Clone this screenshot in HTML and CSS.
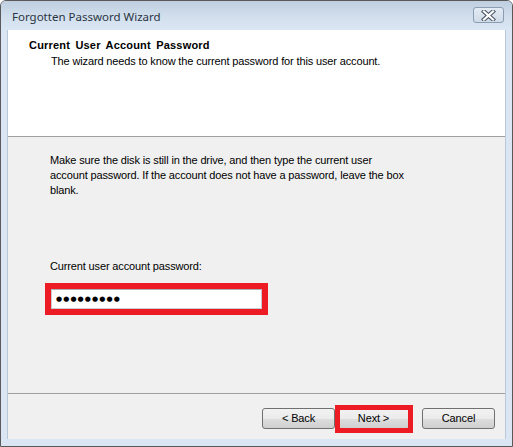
FILE: index.html
```html
<!DOCTYPE html>
<html>
<head>
<meta charset="utf-8">
<link rel="stylesheet" href="styles.css">
</head>
<body>
<div class="window">
  <div class="titlebar">
    <span class="title">Forgotten Password Wizard</span>
    <span class="close">
      <svg width="15" height="11" viewBox="0 0 15 11">
        <path d="M3 1.5 L12 9.5 M12 1.5 L3 9.5" stroke="#4b5563" stroke-width="4.2" stroke-linecap="square" fill="none"/>
        <path d="M3 1.5 L12 9.5 M12 1.5 L3 9.5" stroke="#ffffff" stroke-width="2.2" stroke-linecap="square" fill="none"/>
      </svg>
    </span>
  </div>
  <div class="client">
    <div class="header">
      <div class="h-title">Current User Account Password</div>
      <div class="h-sub">The wizard needs to know the current password for this user account.</div>
    </div>
    <div class="content">
      <p class="intro">Make sure the disk is still in the drive, and then type the current user<br>account password. If the account does not have a password, leave the box<br>blank.</p>
      <div class="field-label">Current user account password:</div>
      <div class="input"><span class="dots">●●●●●●●●●</span></div>
    </div>
    <div class="footer">
      <span class="btn">&lt; Back</span>
      <span class="btn next">Next &gt;</span>
      <span class="btn cancel">Cancel</span>
    </div>
  </div>
</div>
</body>
</html>
```
FILE: styles.css
```css
html, body {
  margin: 0;
  padding: 0;
  background: #ffffff;
}
body {
  font-family: "Liberation Sans", Arial, sans-serif;
  font-size: 11px;
  letter-spacing: -0.14px;
  color: #000;
}
.window {
  width: 513px;
  height: 447px;
  box-sizing: border-box;
  border: 1px solid #595959;
  border-radius: 6px 6px 0 0;
  background: #dae6f3;
  display: flex;
  flex-direction: column;
  padding: 0 6px 7px 6px;
  overflow: hidden;
}
.titlebar {
  height: 29px;
  margin: 0 -6px;
  padding: 0 8px 0 11px;
  display: flex;
  align-items: center;
  justify-content: space-between;
  background: linear-gradient(#bfcfe0, #d3e0ee 60%, #dae6f3);
}
.title {
  font-family: "Noto Sans", sans-serif;
  font-size: 11.5px;
  letter-spacing: 0;
  color: #2a3442;
  margin-top: 1px;
}
.close {
  width: 29px;
  height: 14px;
  border: 1px solid #8c9db2;
  border-radius: 3px;
  background: linear-gradient(#e3ebf4, #cfdbe8);
  display: flex;
  align-items: center;
  justify-content: center;
  margin-top: -1px;
}
.close svg { display: block; }
.client {
  flex: 1;
  display: flex;
  flex-direction: column;
  background: #f0f0f0;
  border-left: 1px solid #b9c7d6;
  border-right: 1px solid #b9c7d6;
}
.header {
  height: 107px;
  box-sizing: border-box;
  background: #ffffff;
  border-bottom: 1px solid #a0a0a0;
  padding: 8px 0 0 21px;
}
.h-title {
  font-weight: bold;
  line-height: 15px;
  letter-spacing: 0.2px;
  word-spacing: 2px;
}
.h-sub {
  line-height: 15px;
  margin-top: 1px;
  padding-left: 22px;
}
.content {
  flex: 1;
  padding: 16px 0 0 42px;
}
.intro {
  margin: 0;
  line-height: 15px;
}
.field-label {
  margin-top: 61px;
  line-height: 15px;
}
.input {
  margin-top: 15px;
  margin-left: 1px;
  width: 211px;
  height: 20px;
  box-sizing: border-box;
  background: #ffffff;
  border: 1px solid #c9ccd2;
  border-top-color: #abadb3;
  outline: 6px solid #ed1c24;
  display: flex;
  align-items: center;
  padding-left: 4px;
}
.dots {
  font-family: "DejaVu Sans", sans-serif;
  font-size: 7px;
  letter-spacing: 1.1px;
  color: #000;
  line-height: 1;
}
.footer {
  height: 46px;
  box-sizing: border-box;
  border-top: 1px solid #a0a0a0;
  display: flex;
  justify-content: flex-end;
  align-items: flex-start;
  padding: 14px 10px 0 0;
}
.btn {
  position: relative;
  width: 73px;
  height: 21px;
  box-sizing: border-box;
  border: 1px solid #707070;
  border-radius: 3px;
  background: linear-gradient(#f2f2f2 0%, #ebebeb 50%, #dddddd 51%, #cfcfcf 100%);
  display: flex;
  align-items: center;
  justify-content: center;
  line-height: 1;
  color: #000;
}
.next {
  margin-left: 2px;
}
.next::after {
  content: "";
  position: absolute;
  left: -3px;
  right: -4px;
  top: -4px;
  bottom: -5px;
  border: 5px solid #ed1c24;
}
.cancel {
  margin-left: 12px;
}
```
